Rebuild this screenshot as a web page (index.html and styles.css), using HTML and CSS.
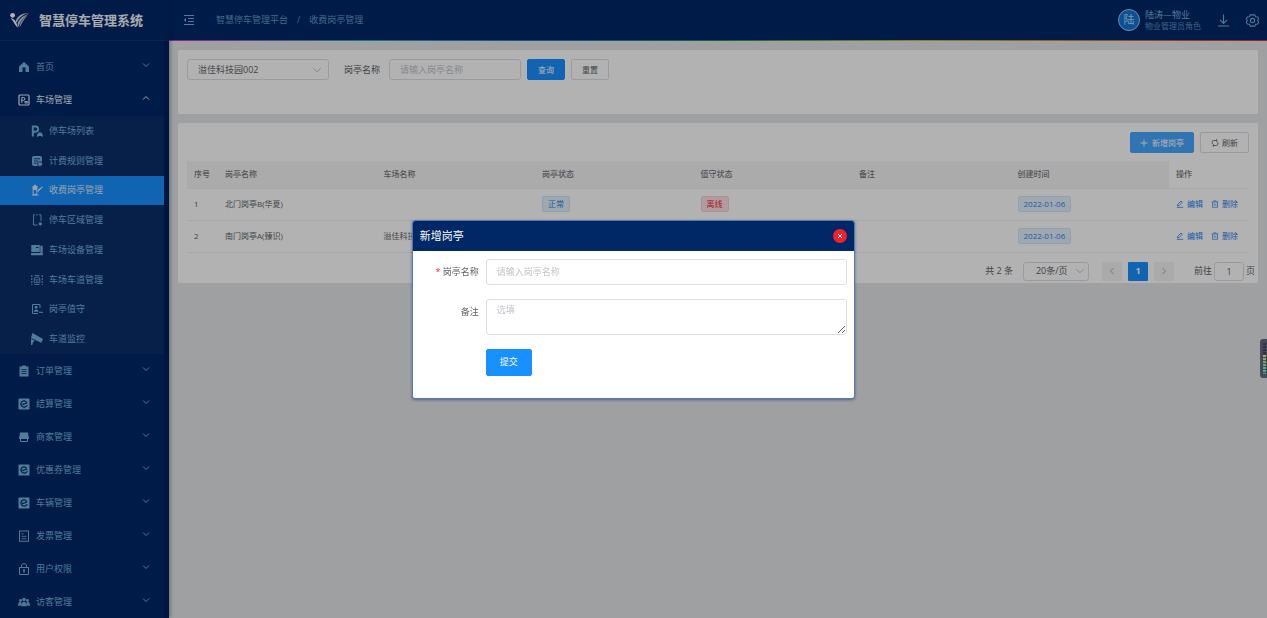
FILE: index.html
```html
<!DOCTYPE html>
<html lang="zh-CN">
<head>
<meta charset="utf-8">
<title>智慧停车管理系统</title>
<link rel="stylesheet" href="styles.css">
</head>
<body>
<svg class="sprite" aria-hidden="true">
  <symbol id="chev" viewBox="0 0 8 8"><path d="M1 2.500 4 5.500 7 2.500" fill="none" stroke="currentColor"/></symbol>
  <symbol id="settle" viewBox="0 0 12 12"><path fill="currentColor" d="M1 .5h10a.5.5 0 0 1 .5.5v10a.5.5 0 0 1-.5.5H1a.5.5 0 0 1-.5-.5V1A.5.5 0 0 1 1 .5Z"/><path d="M4.200 6.600 8.600 5.200C8.300 2.600 4.900 2.100 3.500 4.200 1.900 6.700 4 9.600 6.700 9.100 8 8.900 8.900 8.100 9.300 7.100" fill="none" stroke="#002766" stroke-width="1.200"/></symbol>
  <symbol id="edit" viewBox="0 0 8 8"><path d="M1.800 4.300 5 1l1.300 1.200L3.200 5.500l-1.700.4ZM.8 7.300h6.400" fill="none" stroke="currentColor" stroke-width=".8"/></symbol>
  <symbol id="trash" viewBox="0 0 8 8"><path d="M.6 2h6.800M2.800 2V.8h2.400V2M1.500 2v5.300h5V2M3.200 3.600v2M4.800 3.600v2" fill="none" stroke="currentColor" stroke-width=".7"/></symbol>
</svg>

<div class="app">
  <aside class="side">
    <div class="brand">
      <svg class="brand-mark" viewBox="0 0 20 16"><circle cx="2.600" cy="3.300" r="2.400" fill="#fff"/><path d="M.8 6.300C4 6 6.300 9.500 8 15.800 5.500 14.500 3.500 9 .8 6.300Z" fill="#fff"/><path d="M5.600 9C7.500 4 12 1 20 .8 13.500 2.200 9 5 6.700 11ZM7.400 12.200C9 7.500 12 4 19 1.800 14 4.800 10.500 8.300 8.600 15ZM9.400 15C11 9 13 6 17.500 3.400 13.800 7 12 10.500 10.500 14Z" fill="#fff" opacity=".8"/></svg>
      <h1>智慧停车管理系统</h1>
    </div>
    <nav class="menu">
      <a class="item" href="#"><svg class="ico" viewBox="0 0 12 12"><path fill="currentColor" d="M6 1 11 5.500V11H7.500V7.500a1.500 1.500 0 0 0-3 0V11H1V5.500Z"/></svg><span>首页</span><svg class="chev"><use href="#chev"/></svg></a>
      <a class="item open" href="#"><svg class="ico" viewBox="0 0 12 12"><rect x="1" y="1" width="10" height="10" rx="1" fill="none" stroke="currentColor" stroke-width="1.200"/><path d="M3.800 9V3.500h1.700a1.300 1.300 0 0 1 0 2.800H3.800M6.800 8.800V7.600h2.600v1.200M7 9h2.500" fill="none" stroke="currentColor"/></svg><span>车场管理</span><svg class="chev up"><use href="#chev"/></svg></a>
      <div class="sub">
        <a class="subitem" href="#"><svg class="ico" viewBox="0 0 12 12"><path d="M1.800 11.500V1.500h2.800a2.500 2.500 0 0 1 0 5.200H1.800" fill="none" stroke="currentColor" stroke-width="1.900"/><path fill="currentColor" d="M6 9.200h.6l.7-1.600h3.200l.7 1.600h.6v2.500h-1.300v-.7H7.300v.7H6Z"/></svg><span>停车场列表</span></a>
        <a class="subitem" href="#"><svg class="ico" viewBox="0 0 12 12"><rect x="1" y="1" width="10" height="10" rx="2" fill="currentColor"/><path d="M3 3.800h6M3 6h4M3 8.200h2.500" stroke="#0b2f6b" stroke-width=".9"/><circle cx="9" cy="9" r="2.500" fill="currentColor" stroke="#0b2f6b" stroke-width=".8"/></svg><span>计费规则管理</span></a>
        <a class="subitem active" href="#"><svg class="ico" viewBox="0 0 12 12"><path d="M2.200 5.500h3.600v5H2.200ZM1 11h6.500" fill="none" stroke="currentColor"/><path fill="currentColor" d="M1.500 2h5v3.600h-5ZM3 .8h2V2H3ZM6.500 6.200l4.800-4 .5 1L7 8Z"/></svg><span>收费岗亭管理</span></a>
        <a class="subitem" href="#"><svg class="ico" viewBox="0 0 12 12"><path d="M4 .8H2.500V11h4M8 .8h2V7M5.200.8h1.800" fill="none" stroke="currentColor" stroke-width=".9"/><circle cx="9.300" cy="9.800" r="1.600" fill="currentColor"/></svg><span>停车区域管理</span></a>
        <a class="subitem" href="#"><svg class="ico" viewBox="0 0 12 12"><path fill="currentColor" fill-rule="evenodd" d="M.3 1h8.500v7H.3ZM9.300 1.800h2.400v7H9.300ZM.1 9h11.800v2.200H.1ZM5 3v1h2.500V3Z"/></svg><span>车场设备管理</span></a>
        <a class="subitem" href="#"><svg class="ico" viewBox="0 0 12 12"><path d="M.8 1v10M11.200 1v10" stroke="currentColor" stroke-dasharray="2 1"/><path d="M3.500 1.500h5M3.500 10.500h5M4 3.200h4l.8 2.300v3.200H3.200V5.500ZM3.200 5.800h5.600M5 7.300h2" fill="none" stroke="currentColor" stroke-width=".8"/></svg><span>车场车道管理</span></a>
        <a class="subitem" href="#"><svg class="ico" viewBox="0 0 12 12"><path d="M9 5V1.500H1.500v9H7M8 9.300h4" fill="none" stroke="currentColor"/><circle cx="5.200" cy="4.300" r="1.400" fill="currentColor"/><path fill="currentColor" d="M2.800 8.800c.2-3 4.600-3 4.800 0Z"/></svg><span>岗亭值守</span></a>
        <a class="subitem" href="#"><svg class="ico" viewBox="0 0 12 12"><path fill="currentColor" d="M1.500 0 12 6 10.300 9.800 0 5ZM0 5.800l3.800 1.900L2 9.200 1.300 12H0Z"/></svg><span>车道监控</span></a>
      </div>
      <a class="item" href="#"><svg class="ico" viewBox="0 0 12 12"><path fill="currentColor" fill-rule="evenodd" d="M1.500 1.500H4V.5h4v1h2.500v10h-9ZM3.300 4.200v.9h5.400v-.9ZM3.300 6.200v.9h5.400v-.9ZM3.300 8.200v.9h5.400v-.9Z"/></svg><span>订单管理</span><svg class="chev"><use href="#chev"/></svg></a>
      <a class="item" href="#"><svg class="ico"><use href="#settle"/></svg><span>结算管理</span><svg class="chev"><use href="#chev"/></svg></a>
      <a class="item" href="#"><svg class="ico" viewBox="0 0 12 12"><path fill="currentColor" d="M2 1.500h8L11 8H1Z"/><path d="M2.500 8v2.500h7V8" fill="none" stroke="currentColor"/></svg><span>商家管理</span><svg class="chev"><use href="#chev"/></svg></a>
      <a class="item" href="#"><svg class="ico"><use href="#settle"/></svg><span>优惠券管理</span><svg class="chev"><use href="#chev"/></svg></a>
      <a class="item" href="#"><svg class="ico"><use href="#settle"/></svg><span>车辆管理</span><svg class="chev"><use href="#chev"/></svg></a>
      <a class="item" href="#"><svg class="ico" viewBox="0 0 12 12"><rect x="1.500" y="1" width="9" height="10.300" fill="none" stroke="currentColor"/><path d="M3.500 3.800h2M3.500 6.300h5M3.500 8.800h5" stroke="currentColor" stroke-width=".9"/></svg><span>发票管理</span><svg class="chev"><use href="#chev"/></svg></a>
      <a class="item" href="#"><svg class="ico" viewBox="0 0 12 12"><path d="M1.500 4.500h9v7h-9ZM3.500 4.500V3a2.500 2.500 0 0 1 5 0v1.500M6 7v3" fill="none" stroke="currentColor"/><circle cx="6" cy="7.300" r="1" fill="currentColor"/></svg><span>用户权限</span><svg class="chev"><use href="#chev"/></svg></a>
      <a class="item" href="#"><svg class="ico" viewBox="0 0 12 12"><g fill="currentColor"><circle cx="6" cy="3.500" r="1.800"/><circle cx="2.500" cy="4.500" r="1.400"/><circle cx="9.500" cy="4.500" r="1.400"/><path d="M3.200 10.300c0-6 5.600-6 5.600 0ZM0 9.800c0-4.300 2.800-4.300 3.500-2.800L2.800 9.800ZM12 9.800c0-4.300-2.800-4.300-3.500-2.800l.7 2.800Z"/></g></svg><span>访客管理</span><svg class="chev"><use href="#chev"/></svg></a>
    </nav>
  </aside>

  <div class="page">
    <header class="top">
      <button class="bare" aria-label="收起菜单"><svg class="fold" viewBox="0 0 12 12"><path d="M1 1.500h10M5 4.500h6M5 7.500h6M1 10.500h10" stroke="currentColor"/><path d="M3 4v4L.7 6Z" fill="currentColor"/></svg></button>
      <div class="crumbs"><a href="#">智慧停车管理平台</a><span>/</span><a href="#">收费岗亭管理</a></div>
      <div class="user">
        <span class="avatar">陆</span>
        <div class="who"><div>陆涛—物业</div><div class="role">物业管理员角色</div></div>
      </div>
      <button class="bare" aria-label="下载"><svg class="tool" viewBox="0 0 12 12"><path d="M6 .5v8M2.800 5.500 6 8.700l3.200-3.200M.8 11h10.400" fill="none" stroke="currentColor"/></svg></button>
      <button class="bare" aria-label="设置"><svg class="tool" viewBox="0 0 12 12"><path d="M4 .8h4l.9 1.700 1.900.2.900 1.700-.9 1.600.9 1.600-.9 1.700-1.900.2L8 11.200H4L3.100 9.500l-1.900-.2L.3 7.600 1.200 6 .3 4.400l.9-1.700 1.900-.2Z" fill="none" stroke="currentColor"/><circle cx="6" cy="6" r="2" fill="none" stroke="currentColor"/></svg></button>
    </header>

    <main class="content">
      <form class="card filter">
        <select class="field lot" aria-label="停车场"><option>溢佳科技园002</option></select>
        <label for="q">岗亭名称</label>
        <input class="field query" id="q" placeholder="请输入岗亭名称">
        <button class="btn primary" type="button">查询</button>
        <button class="btn" type="button">重置</button>
      </form>

      <section class="card list">
        <div class="actions">
          <button class="btn add"><svg viewBox="0 0 8 8"><path d="M4 .5v7M.5 4h7" stroke="currentColor" stroke-width=".9"/></svg>新增岗亭</button>
          <button class="btn refresh"><svg viewBox="0 0 8 8"><path d="M1.200 5V3a1.500 1.500 0 0 1 1.500-1.500H6M6.800 3v2a1.500 1.500 0 0 1-1.500 1.500H2M5 .3l1.300 1.200L5 2.700M3 5.300 1.700 6.500 3 7.700" fill="none" stroke="currentColor" stroke-width=".8"/></svg>刷新</button>
        </div>
        <table>
          <colgroup><col class="c-no"><col><col><col><col><col><col><col class="c-op"></colgroup>
          <thead><tr><th>序号</th><th>岗亭名称</th><th>车场名称</th><th>岗亭状态</th><th>值守状态</th><th>备注</th><th>创建时间</th><th class="op">操作</th></tr></thead>
          <tbody>
            <tr><td>1</td><td>北门岗亭B(华夏)</td><td></td><td><span class="tag">正常</span></td><td><span class="tag bad">离线</span></td><td></td><td><span class="tag">2022-01-06</span></td><td><div class="ops"><a href="#"><svg><use href="#edit"/></svg>编辑</a><a href="#"><svg><use href="#trash"/></svg>删除</a></div></td></tr>
            <tr><td>2</td><td>南门岗亭A(臻识)</td><td>溢佳科技园002</td><td><span class="tag">正常</span></td><td><span class="tag bad">离线</span></td><td></td><td><span class="tag">2022-01-06</span></td><td><div class="ops"><a href="#"><svg><use href="#edit"/></svg>编辑</a><a href="#"><svg><use href="#trash"/></svg>删除</a></div></td></tr>
          </tbody>
        </table>
        <div class="pager">
          <span>共 2 条</span>
          <select class="field size" aria-label="每页条数"><option>20条/页</option></select>
          <div class="pages">
            <button class="pg" aria-label="上一页"><svg class="left"><use href="#chev"/></svg></button>
            <button class="pg on">1</button>
            <button class="pg" aria-label="下一页"><svg class="right"><use href="#chev"/></svg></button>
          </div>
          <label class="jump">前往<input class="field" value="1">页</label>
        </div>
      </section>
    </main>
  </div>
</div>

<div class="mask">
  <div class="dialog" role="dialog" aria-labelledby="dlg-title">
    <div class="dlg-head"><h2 id="dlg-title">新增岗亭</h2><button class="close" aria-label="关闭"><svg viewBox="0 0 8 8"><path d="M2 2l4 4M6 2 2 6" stroke="#fff"/></svg></button></div>
    <form class="dlg-form">
      <label for="name"><i>*</i> 岗亭名称</label>
      <input class="field" id="name" placeholder="请输入岗亭名称">
      <label for="memo">备注</label>
      <textarea class="field" id="memo" placeholder="选填"></textarea>
      <button class="btn primary submit" type="button">提交</button>
    </form>
  </div>
</div>
<div class="meter"><span></span></div>
</body>
</html>
```
FILE: styles.css
```css
* { box-sizing: border-box; }
body {
  margin: 0;
  height: 100vh;
  overflow: hidden;
  background: #e4e6e9;
  color: #606266;
  font: 9px/12px "Open Sans", "Noto Sans CJK SC", sans-serif;
}
h1, h2 { margin: 0; font-weight: normal; }
a { color: inherit; text-decoration: none; }
button, input, select, textarea { font: inherit; color: inherit; margin: 0; }
svg { display: block; }
.sprite { position: absolute; width: 0; height: 0; }

.app { display: flex; height: 100vh; }

/* sidebar */
.side {
  flex: none;
  width: 169px;
  overflow: hidden;
  background: #002766;
  color: #74b2dc;
  box-shadow: 1px 0 4px rgba(0, 21, 64, .4);
  z-index: 1;
}
.brand {
  display: flex;
  align-items: center;
  gap: 9px;
  height: 41px;
  padding-left: 10px;
  border-bottom: 1px solid #0b3672;
  color: #f0f4fa;
}
.brand-mark { width: 20px; height: 16px; }
.brand h1 { font-size: 13px; line-height: 20px; font-weight: bold; }
.menu { padding-top: 9px; border-right: 5px solid #00205a; }
.item { display: flex; align-items: center; height: 33px; padding: 0 14px 0 18px; gap: 6px; }
.item.open { color: #e6f0fa; }
.ico { flex: none; width: 12px; height: 12px; }
.item .chev { width: 8px; height: 8px; margin: 0 0 4px auto; }
.item .chev.up { transform: rotate(180deg); }
.sub { display: grid; grid-auto-rows: 1fr; min-height: 238px; background: #0b2f6b; }
.subitem { display: flex; align-items: center; gap: 6px; padding-left: 31px; }
.subitem.active { background: #1890ff; color: #d8e8f8; }

/* header */
.page { flex: 1; min-width: 0; }
.top {
  display: flex;
  align-items: center;
  height: 41px;
  padding: 0 8px 1px 14px;
  background: linear-gradient(90deg, #d030d0, #20b0b0 18%, #3070d0 32%, #209050 50%, #c8c020 68%, #d08020 84%, #e03030) bottom / 100% 1px no-repeat #002766;
  color: #74b2dc;
}
.bare { padding: 0; border: 0; background: none; }
.fold { width: 12px; height: 12px; }
.crumbs { display: flex; gap: 9px; margin-left: 21px; color: #6098c4; }
.user { display: flex; align-items: center; gap: 5px; margin: 0 16px 0 auto; }
.avatar {
  width: 22px;
  border: 1px solid #a8c8e8;
  border-radius: 50%;
  background: #1074d8;
  color: #b8d8f4;
  font-size: 11px;
  line-height: 20px;
  text-align: center;
}
.who { line-height: 11px; }
.role { font-size: 8px; color: #5890c0; }
.tool { width: 13px; height: 13px; }
.bare + .bare { margin-left: 16px; }

/* content */
.content { display: grid; gap: 9px; padding: 9px; }
.card { background: #fff; border-radius: 1px; }
.field {
  height: 21px;
  padding: 0 10px;
  border: 1px solid #dcdfe6;
  border-radius: 3px;
  background: #fff;
  outline: 0;
}
.field::placeholder { color: #c0c4cc; opacity: 1; }
select.field {
  appearance: none;
  background: #fff url("data:image/svg+xml,%3Csvg xmlns='http://www.w3.org/2000/svg' viewBox='0 0 8 8'%3E%3Cpath d='M1 2.500 4 5.500 7 2.500' fill='none' stroke='%23c0c4cc' stroke-width='.8'/%3E%3C/svg%3E") no-repeat right 6px center / 10px;
}
.btn {
  height: 21px;
  padding: 0 9px;
  border: 1px solid #dcdfe6;
  border-radius: 2px;
  background: #fff;
  font-size: 8px;
}
.btn.primary { background: #1890ff; border-color: #1890ff; color: #fff; }
.filter { display: flex; align-items: flex-start; padding: 9px 9px 34px; }
.filter .lot { width: 142px; }
.filter label { margin: 0 9px 0 15px; line-height: 21px; }
.filter .query { width: 132px; margin-right: 6px; }
.filter .btn { width: 38px; }
.filter .btn + .btn { margin-left: 6px; }

.list { padding: 9px 9px 2px; }
.actions { display: flex; justify-content: flex-end; gap: 6px; }
.actions .btn { display: flex; align-items: center; gap: 3px; }
.actions svg { width: 8px; height: 8px; }
.actions .refresh { padding: 0 10px; }
.actions .add { background: #46a6ff; border-color: #46a6ff; color: #fff; }
.actions .add svg { margin-right: 1px; }
table { width: 100%; margin-top: 8px; table-layout: fixed; border-collapse: collapse; font-size: 8px; }
.c-no { width: 31px; }
.c-op { width: 80px; }
th, td { padding: 0 7px; text-align: left; border-bottom: 1px solid #ebeef5; white-space: nowrap; overflow: hidden; }
th { height: 27px; background: #f5f5f6; color: #77797d; font-weight: 500; }
th.op { background: #fff; }
td { height: 32px; }
.tag {
  display: inline-block;
  padding: 0 5px;
  border: 1px solid #cde4fa;
  border-radius: 2px;
  background: #e6f1fb;
  color: #1f85f0;
  line-height: 14px;
}
.tag.bad { border-color: #fbcfd2; background: #fbe0e2; color: #f5222d; }
.ops { display: flex; gap: 8px; color: #2f7fee; }
.ops a { display: flex; align-items: center; gap: 3px; }
.ops svg { width: 8px; height: 8px; }
.pager { display: flex; align-items: center; justify-content: flex-end; margin: 9px -6px 0 0; }
.pager .size { width: 66px; height: 19px; margin: 0 13px 0 10px; padding-left: 12px; background-position: right 3px center; }
.pages { display: flex; gap: 6px; }
.pg { display: grid; place-items: center; width: 20px; height: 19px; padding: 0; border: 0; border-radius: 1px; background: #f4f4f5; color: #a8abb2; }
.pg.on { background: #1890ff; color: #fff; font-weight: bold; }
.pg svg { width: 8px; height: 8px; }
.left { transform: rotate(90deg); }
.right { transform: rotate(-90deg); }
.jump { display: flex; align-items: center; gap: 2px; margin-left: 20px; }
.jump .field { width: 30px; height: 19px; padding: 0; text-align: center; }

/* dialog */
.mask { position: fixed; inset: 0; z-index: 10; display: grid; place-items: center; background: rgba(0, 0, 0, .3); }
.dialog { width: 35%; overflow: hidden; border: 1px solid #5478b0; border-radius: 3px; background: #fff; box-shadow: 0 1px 3px rgba(0, 39, 102, .5); }
.dlg-head { display: flex; align-items: center; justify-content: space-between; height: 30px; padding: 0 7px; background: #002766; color: #fff; }
.dlg-head h2 { font-size: 11px; line-height: 16px; }
.close { display: grid; place-items: center; width: 14px; height: 14px; padding: 0; border: 0; border-radius: 50%; background: #f5222d; }
.close svg { width: 8px; height: 8px; }
.dlg-form { display: grid; grid-template-columns: 59px 1fr; gap: 14px 7px; padding: 8px 7px 22px; }
.dlg-form label { text-align: right; line-height: 26px; white-space: nowrap; }
.dlg-form i { color: #f5222d; font-style: normal; }
.dlg-form input { height: 26px; }
.dlg-form textarea { display: block; width: 100%; height: 36px; padding: 4px 10px; resize: vertical; }
.submit { grid-column: 2; justify-self: start; width: 46px; height: 27px; font-size: 9px; }

/* level meter docked at the window edge */
.meter { position: fixed; right: 0; top: 339px; z-index: 11; width: 7px; height: 39px; padding: 4px 1px 4px 3px; border-radius: 3px 0 0 3px; background: #464a5c; }
.meter span { display: block; height: 31px; background: repeating-linear-gradient(transparent 0 2px, #464a5c 2px 3px), linear-gradient(#2c3040 11px, #b8a840 11px, #70b050 60%, #30b088); }
```
